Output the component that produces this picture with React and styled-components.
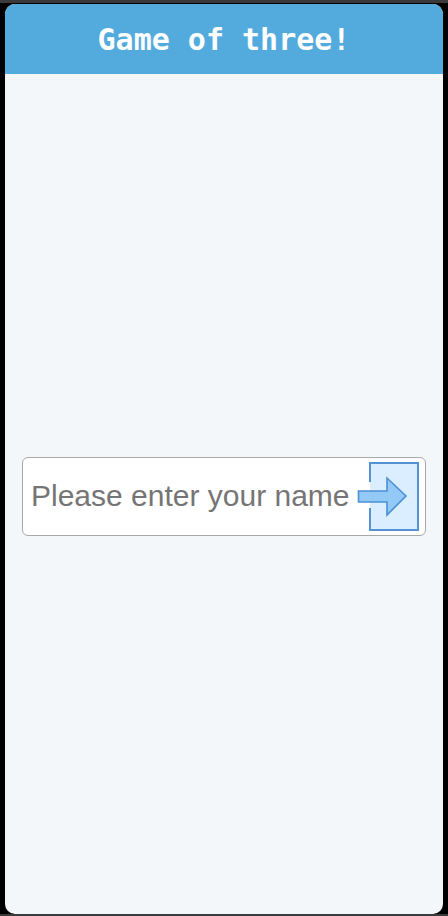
import React from "react";
import styled, { createGlobalStyle } from "styled-components";

const Global = createGlobalStyle`
  html, body { margin: 0; padding: 0; background: #000; }
  * { box-sizing: border-box; }
`;

const Page = styled.div`
  height: 916px;
  background: #000;
  border-top: 3px solid #3a3a3a;
  border-bottom: 2px solid #3a3a3a;
  padding: 1px 5px 0 5px;
  display: flex;
`;

const Card = styled.div`
  flex: 1;
  min-width: 0;
  display: flex;
  flex-direction: column;
  background: #f4f7fa;
  border-radius: 10px;
  overflow: hidden;
`;

const Header = styled.header`
  height: 70px;
  flex-shrink: 0;
  background: #52aadd;
  display: flex;
  align-items: center;
  justify-content: center;
`;

const Title = styled.h1`
  margin: 0;
  font-family: "DejaVu Sans Mono", "Liberation Mono", monospace;
  font-weight: bold;
  font-size: 30px;
  color: #fff;
`;

const Body = styled.main`
  flex: 1;
  display: flex;
  align-items: center;
  padding: 4px 17px 0 17px;
`;

const NameForm = styled.form`
  flex: 1;
  min-width: 0;
  height: 79px;
  display: flex;
  align-items: center;
  background: #fff;
  border: 1px solid #a9a9a9;
  border-radius: 6px;
  padding: 0 5px 0 8px;
`;

const NameInput = styled.input`
  flex: 1;
  width: 0;
  min-width: 0;
  border: none;
  outline: none;
  background: transparent;
  font-family: "Liberation Sans", Arial, sans-serif;
  font-size: 30px;
  color: #333;
  padding: 0;
  &::placeholder { color: #757575; }
`;

const SubmitButton = styled.button`
  flex-shrink: 0;
  border: none;
  background: none;
  padding: 0;
  margin: 0;
  width: 64px;
  height: 72px;
  display: flex;
  cursor: pointer;
`;

function LoginIcon() {
  return (
    <svg width="64" height="72" viewBox="0 0 64 72">
      <rect x="14" y="3" width="48" height="67" fill="#dbeeff" />
      <path d="M14 22 V3 H62 V70 H14 V48" fill="none" stroke="#5493d3" strokeWidth="2" />
      <path
        d="M2.5 31 H31 V18 L50 36 L31 55 V42 H2.5 Z"
        fill="#93c9f6"
        stroke="#4b8fd4"
        strokeWidth="1.6"
        strokeLinejoin="miter"
      />
    </svg>
  );
}

export default function App() {
  return (
    <>
      <Global />
      <Page>
        <Card>
          <Header>
            <Title>Game of three!</Title>
          </Header>
          <Body>
            <NameForm onSubmit={(e) => e.preventDefault()}>
              <NameInput placeholder="Please enter your name" />
              <SubmitButton type="submit" aria-label="Enter">
                <LoginIcon />
              </SubmitButton>
            </NameForm>
          </Body>
        </Card>
      </Page>
    </>
  );
}
